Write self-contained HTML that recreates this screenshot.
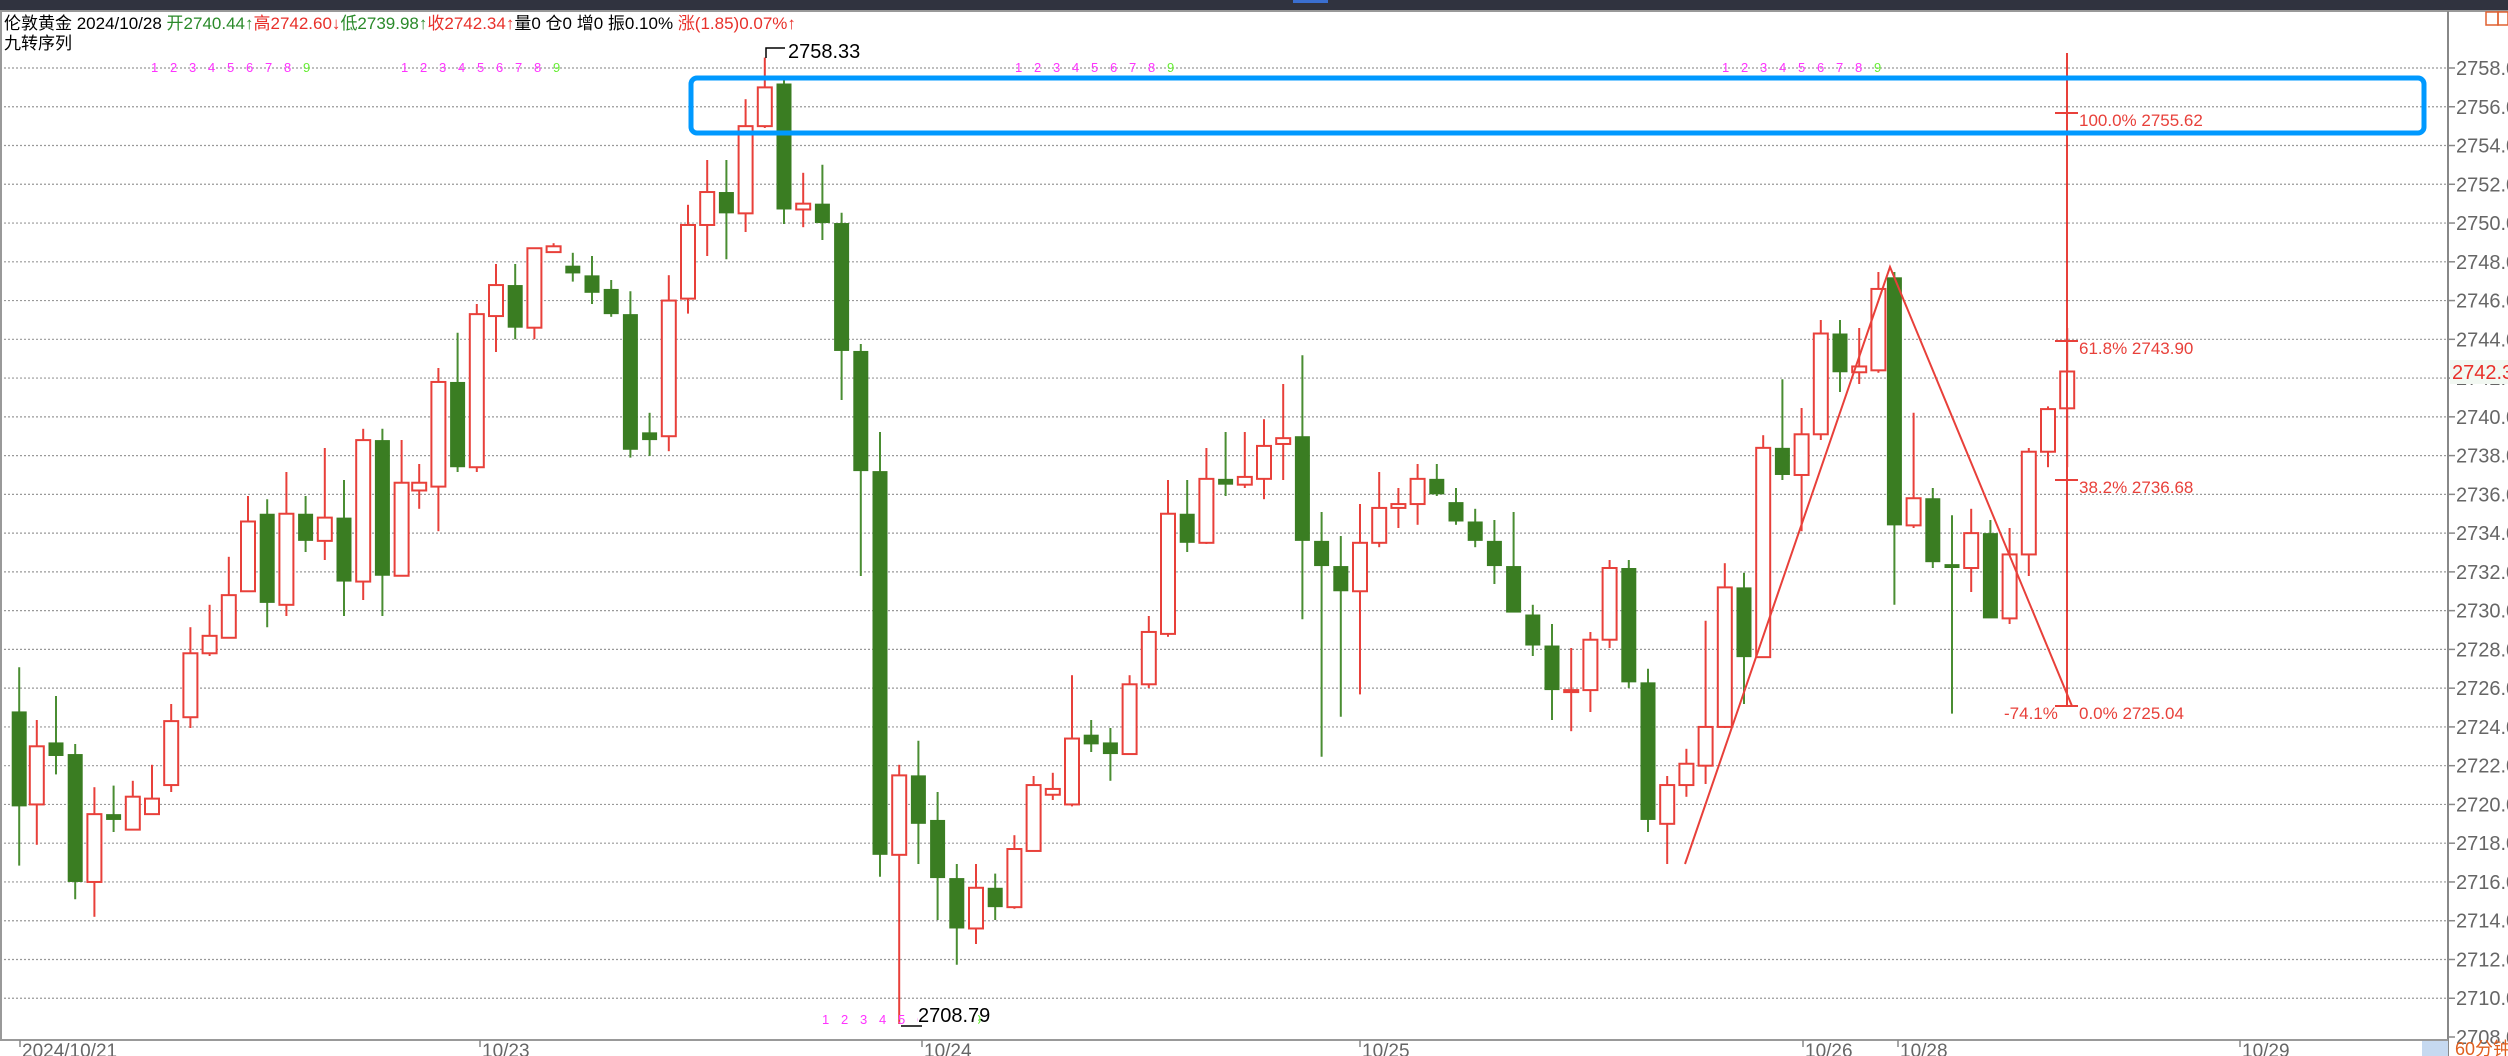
<!DOCTYPE html>
<html><head><meta charset="utf-8"><style>
html,body{margin:0;padding:0;background:#fff;width:2508px;height:1056px;overflow:hidden}
svg{display:block}
text{font-family:"Liberation Sans","Noto Sans CJK SC",sans-serif}
</style></head><body>
<svg id="s" width="2508" height="1056" xmlns="http://www.w3.org/2000/svg">
<rect x="0" y="0" width="2508" height="10" fill="#30333f"/>
<rect x="1293" y="0" width="35" height="3" fill="#3a6fd0"/>
<line x1="0" y1="11" x2="2508" y2="11" stroke="#999" stroke-width="2"/>
<line x1="1" y1="11" x2="1" y2="1040" stroke="#999" stroke-width="2"/>
<line x1="2448" y1="11" x2="2448" y2="1056" stroke="#888" stroke-width="2"/>
<line x1="0" y1="1040" x2="2448" y2="1040" stroke="#999" stroke-width="2"/>
<rect x="2422" y="1041" width="26" height="15" fill="#c6d9f0"/>
<rect x="2486" y="12" width="12" height="13" fill="none" stroke="#e06030" stroke-width="1.5"/>
<rect x="2498" y="12" width="10" height="13" fill="none" stroke="#e06030" stroke-width="1.5"/>
<g id="g"></g>
<text x="4" y="29" font-size="17" fill="#000">伦敦黄金 2024/10/28 <tspan fill="#2a8a2a">开2740.44↑</tspan><tspan fill="#e8302a">高2742.60↓</tspan><tspan fill="#2a8a2a">低2739.98↑</tspan><tspan fill="#e8302a">收2742.34↑</tspan>量0 仓0 增0 振0.10% <tspan fill="#e8302a">涨(1.85)0.07%↑</tspan></text>
<text x="4" y="49" font-size="17" fill="#000">九转序列</text>
<rect x="691" y="78" width="1733" height="55" rx="6" fill="none" stroke="#0099ff" stroke-width="5"/>
</svg>
<script>
var g=document.getElementById('g');var h='';
function Y(p){return 68+(2758-p)*19.38;}
for(var p=2758;p>=2708;p-=2){var y=Y(p);
 if(p>2708)h+='<line x1="0" y1="'+y+'" x2="2448" y2="'+y+'" stroke="#999" stroke-width="1.2" stroke-dasharray="2 2"/>';
 h+='<line x1="2448" y1="'+y+'" x2="2455" y2="'+y+'" stroke="#888" stroke-width="1.5"/>';
 h+='<text x="2456" y="'+(y+7)+'" font-size="20" fill="#666">'+p+'.00</text>';}
var T=[[20,"2024/10/21"],[480,"10/23"],[922,"10/24"],[1360,"10/25"],[1803,"10/26"],[1898,"10/28"],[2240,"10/29"]];
T.forEach(function(t){h+='<line x1="'+t[0]+'" y1="1040" x2="'+t[0]+'" y2="1047" stroke="#888" stroke-width="1.5"/><text x="'+(t[0]+2)+'" y="1057" font-size="19" fill="#666">'+t[1]+'</text>';});
h+='<text x="2455" y="1055" font-size="18" fill="#e06020">60分钟</text>';
var D=[[12,2724.8,2719.9,417,541],[23,2720,2723,450,528],[35,2723.2,2722.5,435,484],[47,2722.6,2716,465,562],[59,2716,2719.5,492,573],[71,2719.5,2719.2,491,520],[83,2718.7,2720.4,488,519],[95,2719.5,2720.3,478,500],[107,2721,2724.3,440,495],[119,2724.5,2727.8,392,455],[131,2727.8,2728.7,378,410],[143,2728.6,2730.8,348,398],[155,2731,2734.6,310,370],[167,2735,2730.4,312,392],[179,2730.3,2735,295,385],[191,2735,2733.6,310,345],[203,2733.6,2734.8,280,350],[215,2734.8,2731.5,300,385],[227,2731.5,2738.8,268,375],[239,2738.8,2731.8,268,385],[251,2731.8,2736.6,275,360],[262,2736.2,2736.6,290,318],[274,2736.4,2741.8,230,332],[286,2741.8,2737.4,208,295],[298,2737.4,2745.3,190,295],[310,2745.2,2746.8,165,220],[322,2746.8,2744.6,165,212],[334,2744.6,2748.7,155,212],[346,2748.5,2748.8,152,158],[358,2747.8,2747.4,158,176],[370,2747.3,2746.4,160,190],[382,2746.6,2745.3,175,198],[394,2745.3,2738.3,182,286],[406,2739.2,2738.8,258,285],[418,2739,2746,172,282],[430,2746.1,2749.9,128,196],[442,2749.9,2751.6,100,160],[454,2751.6,2750.5,100,162],[466,2750.5,2755,62,145],[478,2755,2757,36,80],[490,2757.2,2750.7,50,140],[502,2750.7,2751,108,142],[514,2751,2750,103,150],[526,2750,2743.4,133,250],[538,2743.4,2737.2,215,360],[550,2737.2,2717.4,270,548],[562,2717.4,2721.5,478,640],[574,2721.5,2719,463,540],[586,2719.2,2716.2,495,575],[598,2716.2,2713.6,540,603],[610,2713.6,2715.7,540,590],[622,2715.7,2714.7,546,575],[634,2714.7,2717.7,522,568],[646,2717.6,2721,485,530],[658,2720.5,2720.8,483,500],[670,2720,2723.4,422,504],[682,2723.6,2723.1,450,470],[694,2723.2,2722.6,455,488],[706,2722.6,2726.2,422,470],[718,2726.2,2728.9,385,430],[730,2728.8,2735,300,398],[742,2735,2733.5,300,345],[754,2733.5,2736.8,280,340],[766,2736.8,2736.5,270,310],[778,2736.5,2736.9,270,305],[790,2736.8,2738.5,262,312],[802,2738.6,2738.9,240,300],[814,2739,2733.6,222,387],[826,2733.6,2732.3,320,473],[838,2732.3,2731,335,448],[850,2731,2733.5,315,434],[862,2733.5,2735.3,295,342],[874,2735.3,2735.5,305,330],[886,2735.5,2736.8,290,328],[898,2736.8,2736,290,310],[910,2735.6,2734.6,305,328],[922,2734.6,2733.6,318,342],[934,2733.6,2732.3,325,365],[946,2732.3,2729.9,320,382],[958,2729.8,2728.2,378,410],[970,2728.2,2725.9,390,450],[982,2725.8,2725.9,405,457],[994,2725.9,2728.5,395,445],[1006,2728.5,2732.2,350,405],[1018,2732.2,2726.3,350,430],[1030,2726.3,2719.2,418,520],[1042,2719,2721,485,540],[1054,2721,2722.1,468,498],[1066,2722,2724,388,490],[1078,2724,2731.2,352,455],[1090,2731.2,2727.6,358,440],[1102,2727.6,2738.4,272,410],[1114,2738.4,2737,237,300],[1126,2737,2739.1,255,332],[1138,2739.1,2744.3,200,275],[1150,2744.3,2742.3,200,245],[1162,2742.3,2742.6,205,240],[1174,2742.4,2746.6,170,233],[1184,2747.2,2734.4,170,378],[1196,2734.4,2735.8,258,330],[1208,2735.8,2732.5,305,355],[1220,2732.4,2732.2,322,446],[1232,2732.2,2734,318,370],[1244,2734,2729.6,325,385],[1256,2729.6,2732.9,330,390],[1268,2732.9,2738.2,280,360],[1280,2738.2,2740.4,254,292],[1292,2740.44,2742.34,205,292]];
D.forEach(function(d){var x=d[0]*1.6,o=Y(d[1]),c=Y(d[2]),hi=d[3]*1.6,lo=d[4]*1.6;
 var top=Math.min(o,c),bot=Math.max(o,c);if(bot-top<2){bot=top+2;}
 if(d[2]>=d[1]){var col="#e8403a";
  h+='<line x1="'+x+'" y1="'+hi+'" x2="'+x+'" y2="'+top+'" stroke="'+col+'" stroke-width="2"/><line x1="'+x+'" y1="'+bot+'" x2="'+x+'" y2="'+lo+'" stroke="'+col+'" stroke-width="2"/>';
  h+='<rect x="'+(x-7)+'" y="'+top+'" width="14" height="'+(bot-top)+'" fill="#fff" stroke="'+col+'" stroke-width="2"/>';
 }else{var col="#3a7d22";
  h+='<line x1="'+x+'" y1="'+hi+'" x2="'+x+'" y2="'+lo+'" stroke="#4a8d32" stroke-width="2"/>';
  h+='<rect x="'+(x-7.5)+'" y="'+top+'" width="15" height="'+(bot-top)+'" fill="'+col+'"/>';}
});
function nine(x0,y,n){for(var i=1;i<=n;i++){h+='<text x="'+(x0+(i-1)*19)+'" y="'+y+'" font-size="13" fill="'+(i==9?'#66ee33':'#ff33ff')+'">'+i+'</text>';}}
nine(151,72,9);nine(401,72,9);nine(1015,72,9);nine(1722,72,9);nine(822,1024,9);
h+='<polyline points="766,58 766,48 785,48" fill="none" stroke="#000" stroke-width="1.5"/><text x="788" y="58" font-size="20" fill="#000">2758.33</text>';
h+='<line x1="901" y1="1026" x2="922" y2="1026" stroke="#000" stroke-width="1.5"/><rect x="918" y="1004" width="60" height="20" fill="#fff"/><text x="918" y="1022" font-size="20" fill="#000">2708.79</text>';
var R="#e8403a";
h+='<polyline points="1685,864 1890,267 2072,706" fill="none" stroke="'+R+'" stroke-width="2"/>';
h+='<line x1="2067" y1="53" x2="2067" y2="706" stroke="'+R+'" stroke-width="2"/>';
[[113,"100.0% 2755.62"],[341,"61.8% 2743.90"],[480,"38.2% 2736.68"],[706,"0.0% 2725.04"]].forEach(function(f){
 h+='<line x1="2055" y1="'+f[0]+'" x2="2078" y2="'+f[0]+'" stroke="'+R+'" stroke-width="2"/><text x="2079" y="'+(f[0]+13)+'" font-size="17" fill="'+R+'">'+f[1]+'</text>';});
h+='<text x="2004" y="719" font-size="17" fill="'+R+'">-74.1%</text>';
h+='<rect x="2450" y="360" width="58" height="24" fill="#f2f8f2"/><text x="2452" y="379" font-size="20" fill="#e8302a">2742.34</text>';
g.innerHTML=h;
</script>
</body></html>
